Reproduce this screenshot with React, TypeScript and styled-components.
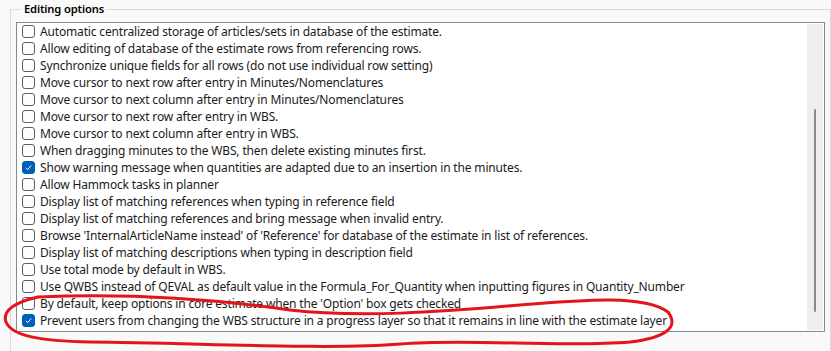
import styled, { createGlobalStyle } from "styled-components";

const Global = createGlobalStyle`
  html, body {
    margin: 0;
    padding: 0;
    background: #f9f9f9;
    overflow: hidden;
  }
  body {
    font-family: "Noto Sans", "Open Sans", sans-serif;
    font-size: 12px;
    color: #1b1b1b;
  }
`;

const Page = styled.div`
  position: relative;
  width: 831px;
  height: 351px;
  padding: 1px 0 0 10px;
  box-sizing: border-box;
`;

const Group = styled.fieldset`
  margin: 0;
  padding: 0 5px 0 5px;
  height: 100%;
  border: 1px solid #dcdcdc;
  border-bottom: none;
  box-sizing: border-box;
`;

const Title = styled.legend`
  margin-left: 5px;
  padding: 0 2px 0 3px;
  font-size: 11.2px;
  font-weight: 600;
  line-height: 16px;
  letter-spacing: -0.15px;
  color: #000;
`;

const ListBox = styled.div`
  display: flex;
  margin-top: 5px;
  height: 310px;
  border: 1px solid #858a8f;
  background: #fff;
  box-sizing: border-box;
`;

const Rows = styled.div`
  flex: 1;
  padding: 0 0 0 5px;
`;

const Row = styled.div`
  display: flex;
  align-items: center;
  gap: 5px;
  height: 17px;
  white-space: nowrap;
`;

const Box = styled.span<{ $checked: boolean }>`
  display: flex;
  align-items: center;
  justify-content: center;
  flex: none;
  width: 13px;
  height: 13px;
  border-radius: 3px;
  box-sizing: border-box;
  border: 1px solid ${(p) => (p.$checked ? "#005fb8" : "#5d5d5d")};
  background: ${(p) => (p.$checked ? "#005fb8" : "#fdfdfd")};
`;

const Label = styled.span`
  font-size: 12px;
  line-height: 17px;
  letter-spacing: -0.16px;
`;

const ScrollBar = styled.div`
  position: relative;
  width: 16px;
  margin: 1px 1px 1px 0;
  background: #eeeeee;
`;

const Thumb = styled.div`
  position: absolute;
  left: 7px;
  top: 85px;
  width: 2px;
  height: 203px;
  border-radius: 1px;
  background: #8a8a8a;
`;

const Marker = styled.svg`
  position: absolute;
  left: 0;
  top: 0;
  pointer-events: none;
`;

const options: [string, boolean][] = [
  ["Automatic centralized storage of articles/sets in database of the estimate.", false],
  ["Allow editing of database of the estimate rows from referencing rows.", false],
  ["Synchronize unique fields for all rows (do not use individual row setting)", false],
  ["Move cursor to next row after entry in Minutes/Nomenclatures", false],
  ["Move cursor to next column after entry in Minutes/Nomenclatures", false],
  ["Move cursor to next row after entry in WBS.", false],
  ["Move cursor to next column after entry in WBS.", false],
  ["When dragging minutes to the WBS, then delete existing minutes first.", false],
  ["Show warning message when quantities are adapted due to an insertion in the minutes.", true],
  ["Allow Hammock tasks in planner", false],
  ["Display list of matching references when typing in reference field", false],
  ["Display list of matching references and bring message when invalid entry.", false],
  ["Browse 'InternalArticleName instead' of 'Reference' for database of the estimate in list of references.", false],
  ["Display list of matching descriptions when typing in description field", false],
  ["Use total mode by default in WBS.", false],
  ["Use QWBS instead of QEVAL as default value in the Formula_For_Quantity when inputting figures in Quantity_Number", false],
  ["By default, keep options in core estimate when the 'Option' box gets checked", false],
  ["Prevent users from changing the WBS structure in a progress layer so that it remains in line with the estimate layer", true],
];

function Check() {
  return (
    <svg width="9" height="9" viewBox="0 0 9 9">
      <path d="M1.8 4.8 L3.7 6.6 L7.2 2.5" fill="none" stroke="#fff" strokeWidth="1" />
    </svg>
  );
}

export default function App() {
  return (
    <Page>
      <Global />
      <Group>
        <Title>Editing options</Title>
        <ListBox>
          <Rows>
            {options.map(([text, checked]) => (
              <Row key={text}>
                <Box $checked={checked}>{checked && <Check />}</Box>
                <Label>{text}</Label>
              </Row>
            ))}
          </Rows>
          <ScrollBar>
            <Thumb />
          </ScrollBar>
        </ListBox>
      </Group>
      <Marker width="831" height="351" viewBox="0 0 831 351">
        <path
          d="M38 297 C 110 294, 200 297, 290 310 C 360 318, 440 312, 520 305 C 580 300, 644 294, 668 312 C 680 328, 664 338, 630 342 C 560 348, 470 338, 400 344 C 330 350, 200 343, 90 342 C 40 341, 12 336, 6 322 C 2 310, 16 302, 38 297"
          fill="none"
          stroke="#e3141b"
          strokeWidth="3"
          strokeLinecap="round"
        />
      </Marker>
    </Page>
  );
}
